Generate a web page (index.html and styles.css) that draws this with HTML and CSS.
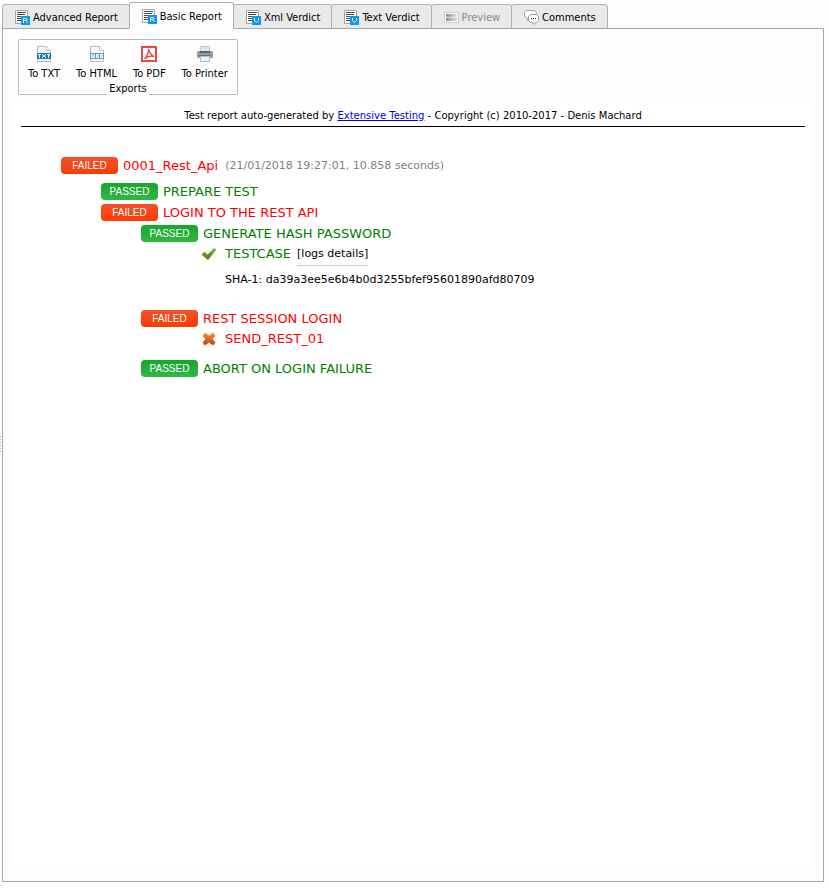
FILE: index.html
```html
<!DOCTYPE html>
<html lang="en">
<head>
<meta charset="utf-8">
<title>Test report</title>
<link rel="stylesheet" href="styles.css">
</head>
<body>
<svg class="defs" aria-hidden="true">
  <defs>
    <g id="sheet">
      <path d="M.5.5h12v13H.5z" fill="#fff" stroke="#a4a4a4"/>
      <path d="M2 2.5h9M2 4.5h8M2 6.5h9M2 8.5h4M2 10.5h4" stroke="#4c4c4c"/>
      <path d="M6 6h9v9H6z" fill="#0c96ff"/>
    </g>
    <symbol id="report" viewBox="0 0 15 15">
      <use href="#sheet"/>
      <path d="M8.500 13V8.500H11l1 .5v1l-1 .5H9M11 10.500l1.500 2.500" fill="none" stroke="#f4f49a"/>
    </symbol>
    <symbol id="verdict" viewBox="0 0 15 15">
      <use href="#sheet"/>
      <path d="M8.500 8v2.500l2 2 2-2V8" fill="none" stroke="#f4f49a"/>
    </symbol>
    <g id="file">
      <path d="M1.500 15.500V.5h9l4 4v11z" fill="#f8f8f8" stroke="#bcbcbc"/>
      <path d="M10.500.5v4h4" fill="#fff" stroke="#bcbcbc"/>
    </g>
    <linearGradient id="green" x2="0" y2="1"><stop stop-color="#8dbb52"/><stop offset="1" stop-color="#42720f"/></linearGradient>
    <linearGradient id="orange" x2="0" y2="1"><stop stop-color="#f29a42"/><stop offset="1" stop-color="#c03810"/></linearGradient>
    <linearGradient id="photo"><stop stop-color="#888"/><stop offset="1" stop-color="#ddd"/></linearGradient>
  </defs>
</svg>
<div class="splitter" aria-hidden="true"></div>
<main class="window">
  <nav class="tabs" role="tablist">
    <button class="tab" role="tab"><svg class="icon"><use href="#report"/></svg>Advanced Report</button>
    <button class="tab active" role="tab" aria-selected="true"><svg class="icon"><use href="#report"/></svg>Basic Report</button>
    <button class="tab" role="tab"><svg class="icon"><use href="#verdict"/></svg>Xml Verdict</button>
    <button class="tab" role="tab"><svg class="icon"><use href="#verdict"/></svg>Text Verdict</button>
    <button class="tab" role="tab" disabled><svg class="icon" viewBox="0 0 15 15"><path d="M.5 2.500h14v10H.5z" fill="#fff" stroke="#ccc"/><path d="M2 4h11v7H2z" fill="url(#photo)"/><path d="M2 6c4 2 7-1 11 0v2c-4 1-7 1-11 0z" fill="#eee" opacity=".6"/></svg>Preview</button>
    <button class="tab" role="tab"><svg class="icon" viewBox="0 0 15 15"><path d="M2.500.5h8l2 2v4l-2 2h-5l-2 2v-2l-3-2v-4z" fill="#fff" stroke="#a4a4a4"/><path d="M6.500 4.500h6l2 2v4l-2 2h-1l-1.500 2-1.500-2h-2l-2-2v-4z" fill="#fff" stroke="#999"/><path d="M7 8.500h1m1 0h1m1 0h1" stroke="#228"/></svg>Comments</button>
  </nav>
  <section class="panel">
    <div class="exports" role="group" aria-labelledby="exports-title">
      <div class="tools">
        <button class="tool"><svg class="tool-icon" viewBox="0 0 16 16"><use href="#file"/><path d="M1 7h14v6H1z" fill="#187ac0"/><path d="M2 8.500h3M3.500 8v4M6.500 8v1l3 2v1M9.500 8v1l-3 2v1M11 8.500h3M12.500 8v4" stroke="#fff" fill="none"/></svg>To TXT</button>
        <button class="tool"><svg class="tool-icon" viewBox="0 0 16 16"><use href="#file"/><path d="M1 7h14v6H1z" fill="#5b9bbd"/><path d="M2.500 8v3.500h3V8M4 8v3M10 8.500H7.500v3H10M7.500 10H10M11.500 8v3.500h2v-3h-2M11.500 10h2" stroke="#fff" fill="none"/></svg>To HTML</button>
        <button class="tool"><svg class="tool-icon" viewBox="0 0 16 16"><path d="M1 1h14v14H1z" fill="#fff" stroke="#e8493c" stroke-width="2"/><path d="M7.500 3C8.500 7 10 9 13 10.500 9 9.500 6 10.500 3.500 13 6 10 8 7 7.500 3z" fill="none" stroke="#e8493c" stroke-width="1.300"/></svg>To PDF</button>
        <button class="tool"><svg class="tool-icon" viewBox="0 0 16 16"><path d="M3.500.5h9V6h-9z" fill="#d5eafb" stroke="#b5c8d8"/><path d="M1 5h14l1 1v5l-1 1H1l-1-1V6z" fill="#969ca2"/><path d="M3 5h10v2H3z" fill="#5c6166"/><path d="M2 9h12v1H2z" fill="#6b7075"/><path d="M3.500 10.500h9v5h-9z" fill="#e4f2fd" stroke="#a9bfd2"/></svg>To Printer</button>
      </div>
      <div class="exports-title" id="exports-title">Exports</div>
    </div>
    <article class="report">
      <header class="report-head">Test report auto-generated by <a href="#">Extensive Testing</a> - Copyright (c) 2010-2017 - Denis Machard</header>
      <ul class="tree">
        <li>
          <div class="row failed"><span class="badge">FAILED</span>0001_Rest_Api <span class="meta">(21/01/2018 19:27:01, 10.858 seconds)</span></div>
          <ul class="steps">
            <li><div class="row passed"><span class="badge">PASSED</span>PREPARE TEST</div></li>
            <li>
              <div class="row failed"><span class="badge">FAILED</span>LOGIN TO THE REST API</div>
              <ul>
                <li>
                  <div class="row passed"><span class="badge">PASSED</span>GENERATE HASH PASSWORD</div>
                  <div class="case passed"><svg class="mark" viewBox="0 0 16 16"><path d="M.5 8.500 3.500 5.500l3 3L13 2l2.500 1.500L7 14z" fill="url(#green)"/></svg>TESTCASE <button class="details">[logs details]</button></div>
                  <p class="log">SHA-1: da39a3ee5e6b4b0d3255bfef95601890afd80709</p>
                </li>
                <li>
                  <div class="row failed"><span class="badge">FAILED</span>REST SESSION LOGIN</div>
                  <div class="case failed"><svg class="mark" viewBox="0 0 16 16"><path d="M4 1.500l4 3 4-3L14.500 5l-3 3 3 3.500L12 14.500l-4-3-4 3L1.500 11.500l3-3.500-3-3z" fill="url(#orange)"/></svg>SEND_REST_01</div>
                </li>
                <li><div class="row passed last"><span class="badge">PASSED</span>ABORT ON LOGIN FAILURE</div></li>
              </ul>
            </li>
          </ul>
        </li>
      </ul>
    </article>
  </section>
</main>
</body>
</html>
```
FILE: styles.css
```css
* { box-sizing: border-box; }
body {
  margin: 0;
  background: #fdfdfd;
  color: #000;
  font-family: "DejaVu Sans Condensed", Tahoma, sans-serif;
  font-size: 11px;
}
button {
  margin: 0;
  padding: 0;
  border: 0;
  background: none;
  color: inherit;
  font: inherit;
}
ul { margin: 0; padding: 0; list-style: none; }
.defs { position: absolute; width: 0; height: 0; }
.splitter {
  position: absolute;
  top: 50%;
  left: 0;
  width: 1px;
  height: 16px;
  margin-top: -8px;
  background: repeating-linear-gradient(#bbb 0 1px, transparent 1px 3px);
}
.window {
  display: flex;
  flex-direction: column;
  min-height: 100vh;
  padding: 2px 5px 6px 2px;
}
.tabs { display: flex; align-items: flex-end; margin-bottom: -1px; }
.tab {
  display: flex;
  align-items: center;
  gap: 3px;
  height: 25px;
  padding: 2px 11px 0 12px;
  margin-right: -1px;
  border: 1px solid #b0b0b0;
  border-radius: 3px 3px 0 0;
  background: #e9e9e9;
  white-space: nowrap;
}
.tab.active {
  z-index: 1;
  height: 27px;
  border-bottom-color: #fdfdfd;
  background: #fdfdfd;
}
.tab:disabled { color: #888; }
.icon { width: 15px; height: 15px; }
.panel {
  flex: 1;
  display: flex;
  flex-direction: column;
  align-items: flex-start;
  padding: 10px;
  border: 1px solid #a6a6a6;
}
.exports {
  margin: 0 5px;
  padding: 6px 5px 0;
  border: 1px solid #b9b9b9;
  border-radius: 2px;
  height: 56px;
}
.tools { display: flex; gap: 8px; }
.tool {
  display: flex;
  flex-direction: column;
  align-items: center;
  gap: 4px;
  padding: 0 4px;
  line-height: 15px;
}
.tool-icon { width: 16px; height: 16px; }
.exports-title {
  width: max-content;
  margin: 0 auto;
  padding: 0 2px;
  background: #fdfdfd;
  line-height: 16px;
}
.report {
  flex: 1;
  align-self: stretch;
  margin-top: 6px;
  padding: 8px;
  background: #fff;
  font-family: "DejaVu Sans", Verdana, sans-serif;
}
.report-head {
  padding-bottom: 3px;
  border-bottom: 1px solid #000;
  font-size: 10px;
  line-height: 14px;
  text-align: center;
}
.report-head a { color: #00e; }
.tree { padding: 28px 0 0 40px; font-size: 13px; }
.tree ul { padding-left: 40px; }
.tree .steps { padding-top: 5px; }
.row { display: flex; align-items: center; gap: 5px; height: 21px; }
.badge {
  width: 57px;
  border-radius: 4px;
  background: linear-gradient(#f4512c, #fa3c02);
  color: #fff;
  font: 10px/17px "Liberation Sans", Arial, sans-serif;
  text-align: center;
}
.passed .badge { background: linear-gradient(#17a52f, #30b944); }
.failed { color: #f00; }
.passed { color: #008000; }
.meta { margin-left: 2px; color: #808080; font-size: 11px; }
.case { display: flex; align-items: center; height: 19px; padding-left: 60px; }
.mark { width: 16px; height: 16px; margin-right: 8px; }
.details {
  margin-left: 6px;
  padding: 5px 0;
  border: solid transparent;
  border-width: 1px 0;
  border-bottom-color: #ccc;
  color: #000;
  font-size: 11px;
}
.log { margin: 9px 0 21px 84px; font-size: 11px; line-height: 15px; }
.last { margin-top: 10px; }
```
